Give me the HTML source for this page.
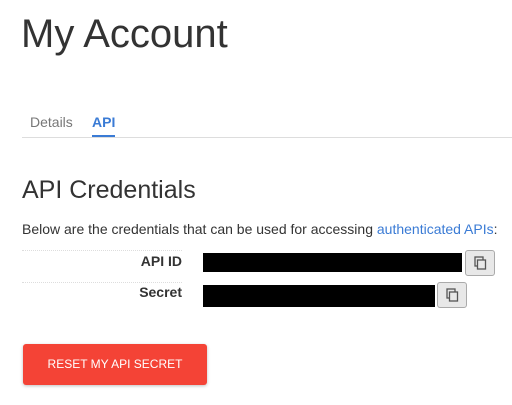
<!DOCTYPE html>
<html><head><style>
body{margin:0;background:#fff;font-family:"Liberation Sans",sans-serif;color:#333;width:512px;height:405px;overflow:hidden;position:relative}
.a{position:absolute}
</style></head><body>
<div class="a" style="left:21px;top:12px;font-size:40px;color:#333;">My Account</div>
<div class="a" style="left:22px;top:137px;width:490px;height:1px;background:#ddd"></div>
<div class="a" style="left:30px;top:114px;font-size:14px;color:#777">Details</div>
<div class="a" style="left:92px;top:114px;font-size:14px;color:#3a7bd5;font-weight:bold">API</div>
<div class="a" style="left:92px;top:135px;width:23px;height:2px;background:#3a7bd5"></div>
<div class="a" style="left:22px;top:176px;font-size:25px;color:#333">API Credentials</div>
<div class="a" style="left:22px;top:221px;font-size:14px;color:#333">Below are the credentials that can be used for accessing <span style="color:#3a7bd5">authenticated APIs</span>:</div>
<div class="a" style="left:22px;top:250px;width:160px;border-top:1px dotted #ddd"></div>
<div class="a" style="left:22px;top:282px;width:160px;border-top:1px dotted #ddd"></div>
<div class="a" style="left:120px;top:253px;width:62px;text-align:right;font-size:14px;font-weight:bold">API ID</div>
<div class="a" style="left:120px;top:284px;width:62px;text-align:right;font-size:14px;font-weight:bold">Secret</div>
<div class="a" style="left:203px;top:253px;width:259px;height:19px;background:#000"></div>
<div class="a" style="left:203px;top:285px;width:232px;height:22px;background:#000"></div>
<div class="a" style="left:465px;top:250px;width:28px;height:24px;border:1px solid #aaa;border-radius:3px;background:#e8e8e8">
<svg width="28" height="24"><rect x="9" y="6" width="8" height="9" fill="none" stroke="#555" stroke-width="1.3"/><rect x="11.5" y="9" width="8" height="9" fill="#e8e8e8" stroke="#555" stroke-width="1.3"/></svg></div>
<div class="a" style="left:437px;top:282px;width:28px;height:24px;border:1px solid #aaa;border-radius:3px;background:#e8e8e8">
<svg width="28" height="24"><rect x="9" y="6" width="8" height="9" fill="none" stroke="#555" stroke-width="1.3"/><rect x="11.5" y="9" width="8" height="9" fill="#e8e8e8" stroke="#555" stroke-width="1.3"/></svg></div>
<div class="a" style="left:23px;top:344px;width:184px;height:41px;background:#f44336;border-radius:3px;box-shadow:0 1px 3px rgba(0,0,0,.25);color:#fff;font-size:12px;line-height:41px;text-align:center">RESET MY API SECRET</div>
</body></html>
